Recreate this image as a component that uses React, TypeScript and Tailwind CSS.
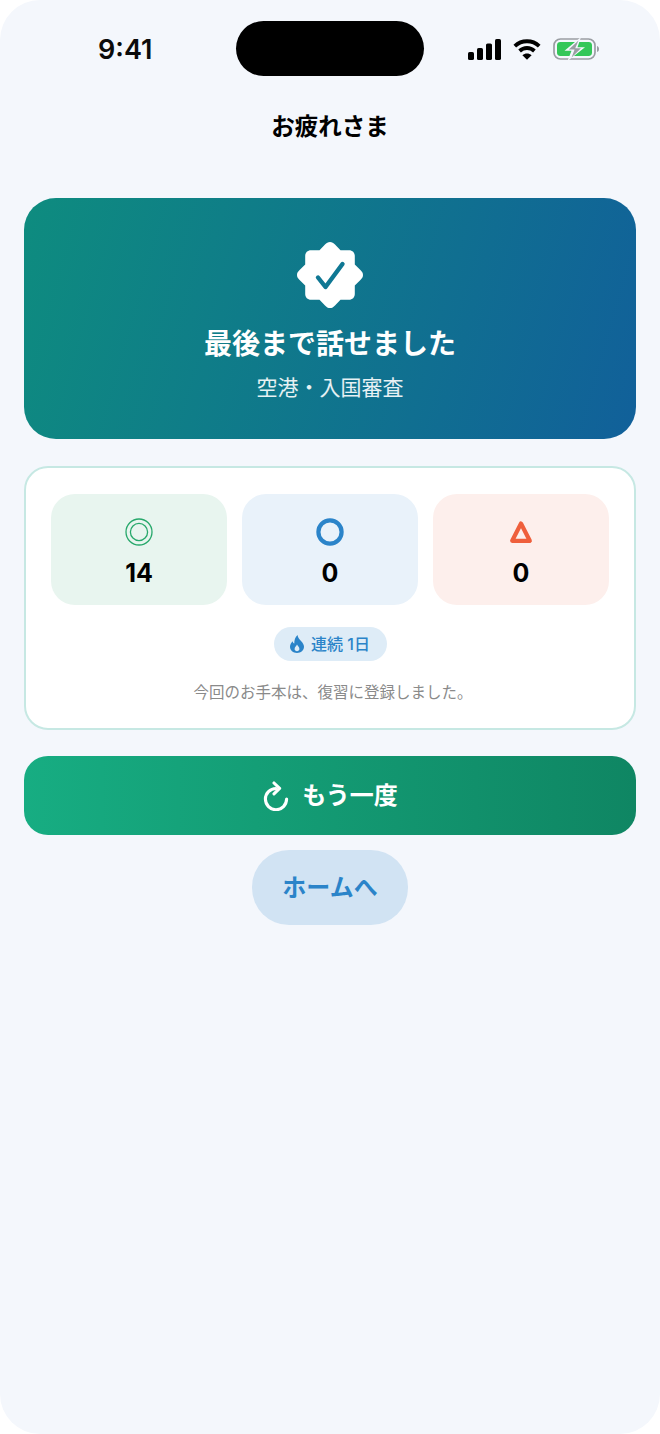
const font = { fontFamily: '"Inter", "Noto Sans CJK JP", sans-serif' };

function StatusIcons() {
  return (
    <div className="flex items-center gap-[12px]">
      <svg width="33" height="21" viewBox="0 0 33 21" fill="#000">
        <rect x="0" y="13" width="6" height="8" rx="1.6" />
        <rect x="9" y="9" width="6" height="12" rx="1.6" />
        <rect x="18" y="4.5" width="6" height="16.5" rx="1.6" />
        <rect x="27" y="0" width="6" height="21" rx="1.6" />
      </svg>
      <svg width="28" height="21" viewBox="0 0 28 21" fill="none" stroke="#000" strokeWidth="3.8">
        <path d="M1.8 7.2 C8.6 0.6 19.4 0.6 26.2 7.2" />
        <path d="M6.6 12 C10.8 8 17.2 8 21.4 12" />
        <path d="M14 20.8 L9.4 16.2 C12 14 16 14 18.6 16.2 Z" fill="#000" stroke="none" />
      </svg>
      <svg width="46" height="22" viewBox="0 0 46 22">
        <rect x="1" y="1" width="41" height="20" rx="6.5" fill="none" stroke="#9a9ea3" strokeWidth="1.7" />
        <path d="M44 8 C45.5 8.5 46 9.5 46 11 C46 12.5 45.5 13.5 44 14 Z" fill="#9a9ea3" />
        <rect x="4" y="4" width="35" height="14" rx="3.4" fill="#34c759" />
        <path d="M28 -1 L11.5 12.8 H18.5 L14.5 23 L32 9.2 H24.5 Z" fill="#f4f7fc" />
        <path d="M25.5 2.5 L15.8 11.6 H21.6 L18.6 19.5 L28 10.2 H22.2 Z" fill="#9a9ea3" />
      </svg>
    </div>
  );
}

function Badge() {
  return (
    <svg width="66" height="66" viewBox="0 0 66 66">
      <path
        fill="#fff"
        d="M33 0 C35 0 36.5 1 38 2.6 L43.5 8.2 L52 8.2 C55.4 8.2 57.8 10.6 57.8 14 L57.8 22.5 L63.4 28 C65 29.5 66 31 66 33 C66 35 65 36.5 63.4 38 L57.8 43.5 L57.8 52 C57.8 55.4 55.4 57.8 52 57.8 L43.5 57.8 L38 63.4 C36.5 65 35 66 33 66 C31 66 29.5 65 28 63.4 L22.5 57.8 L14 57.8 C10.6 57.8 8.2 55.4 8.2 52 L8.2 43.5 L2.6 38 C1 36.5 0 35 0 33 C0 31 1 29.5 2.6 28 L8.2 22.5 L8.2 14 C8.2 10.6 10.6 8.2 14 8.2 L22.5 8.2 L28 2.6 C29.5 1 31 0 33 0 Z"
      />
      <path d="M21 35.5 L28.5 45 L45.5 22" fill="none" stroke="#0f7894" strokeWidth="4.4" strokeLinecap="round" strokeLinejoin="round" />
    </svg>
  );
}

function Tile({ bg, icon, value }: { bg: string; icon: React.ReactNode; value: string }) {
  return (
    <div className={`flex h-[111px] flex-1 flex-col items-center rounded-[24px] pt-6 ${bg}`}>
      <div className="flex h-7 w-7 items-center justify-center">{icon}</div>
      <div className="mt-[11px] text-[25px] leading-[32px] font-bold text-black">{value}</div>
    </div>
  );
}

export default function App() {
  return (
    <div className="h-[1434px] w-[660px] bg-white" style={font}>
      <div className="h-full w-full rounded-[40px] bg-[#f4f7fc] px-6">
        <div className="flex h-[76px] items-start pt-[21px]">
          <div className="w-[212px] pt-[12px] pl-[74px] text-[27px] leading-[34px] font-semibold text-[#0b0b0b]">9:41</div>
          <div className="h-[55px] w-[188px] rounded-[28px] bg-black" />
          <div className="mt-[17px] ml-[44px]">
            <StatusIcons />
          </div>
        </div>

        <h1 className="mt-[35px] text-center text-[23.5px] leading-8 font-bold text-black">お疲れさま</h1>

        <section className="mt-[55px] flex h-[241px] flex-col items-center rounded-[32px] bg-[linear-gradient(106deg,#0e8c7f,#11609a)] pt-[44px]">
          <Badge />
          <div className="mt-[16px] text-[28px] leading-[40px] font-bold text-white">最後まで話せました</div>
          <div className="mt-[9px] text-[21px] leading-[30px] text-white/90">空港・入国審査</div>
        </section>

        <section className="mt-[27px] flex h-[264px] flex-col items-center rounded-[24px] border-2 border-[#c6e8e3] bg-white px-[25px] pt-[26px]">
          <div className="flex w-full gap-[15px]">
            <Tile
              bg="bg-[#e8f5ef]"
              value="14"
              icon={
                <svg width="28" height="28" viewBox="0 0 28 28" fill="none" stroke="#27a86b" strokeWidth="1.3">
                  <circle cx="14" cy="14" r="13" />
                  <circle cx="14" cy="14" r="8.6" />
                </svg>
              }
            />
            <Tile
              bg="bg-[#e9f2fa]"
              value="0"
              icon={
                <svg width="28" height="28" viewBox="0 0 28 28" fill="none" stroke="#2b84c9" strokeWidth="4.2">
                  <circle cx="14" cy="14" r="11.6" />
                </svg>
              }
            />
            <Tile
              bg="bg-[#fdefec]"
              value="0"
              icon={
                <svg width="28" height="28" viewBox="0 0 28 28" fill="none" stroke="#ef5f3c" strokeWidth="4.2" strokeLinejoin="round">
                  <path d="M14 5.5 L22.8 22.8 H5.2 Z" />
                </svg>
              }
            />
          </div>

          <div className="mt-[22px] flex h-[34px] w-[113px] items-center justify-center gap-[7px] rounded-full bg-[#deecf7]">
            <svg width="14" height="18" viewBox="0 0 14 18" fill="#2b84c9">
              <path
                fillRule="evenodd"
                d="M7.5 0 C8 3 9.5 4.2 11 6 C12.6 7.8 14 9.5 14 11.8 C14 15.4 10.9 18 7 18 C3.1 18 0 15.4 0 11.8 C0 9.5 1.2 7.6 2.6 6.2 C2.8 7.4 3.4 8.2 4.3 8.6 C4.2 5.2 5.2 2.2 7.5 0 Z M7 9.6 C6.6 11 4.6 12 4.6 14 C4.6 15.4 5.7 16.2 7 16.2 C8.3 16.2 9.4 15.4 9.4 14 C9.4 12 7.6 11.2 7 9.6 Z"
              />
            </svg>
            <span className="text-[16px] leading-5 font-medium text-[#2b84c9]">連続 1日</span>
          </div>

          <p className="mt-[22px] pl-[6px] text-[15.5px] leading-[20px] text-[#8a8a8a]">今回のお手本は、復習に登録しました。</p>
        </section>

        <button className="mt-[26px] flex h-[79px] w-full items-center justify-center gap-[13px] rounded-[24px] bg-gradient-to-r from-[#17ad82] to-[#0f8663]">
          <svg width="27" height="30" viewBox="0 0 27 30" fill="none" stroke="#fff" strokeWidth="3.1" strokeLinecap="round" strokeLinejoin="round">
            <path d="M14 7.5 A10.6 10.6 0 1 0 24.6 18.1" />
            <path d="M12 2 L17.6 7.4 L12 12.8" />
          </svg>
          <span className="text-[24px] leading-8 font-bold text-white">もう一度</span>
        </button>

        <button className="mx-auto mt-[15px] flex h-[75px] w-[156px] items-center justify-center rounded-[37px] bg-[#d1e3f3]">
          <span className="text-[24px] leading-8 font-bold text-[#2b84c9]">ホームへ</span>
        </button>
      </div>
    </div>
  );
}
